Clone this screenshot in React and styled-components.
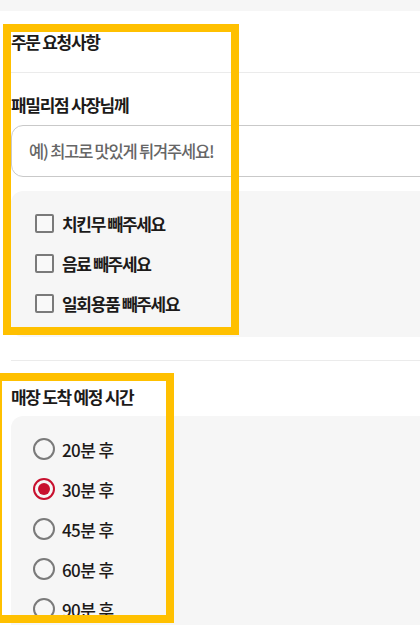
import React from "react";
import styled, { createGlobalStyle } from "styled-components";

const GlobalStyle = createGlobalStyle`
  html, body {
    margin: 0;
    padding: 0;
    overflow: hidden;
    background: #fff;
  }
  body {
    font-family: "Noto Sans CJK KR", "Noto Sans", sans-serif;
    color: #1c1a19;
  }
`;

const Page = styled.div`
  position: relative;
  width: 440px;
`;

const TopStrip = styled.div`
  height: 11px;
  background: #f6f6f6;
`;

const Section = styled.section`
  padding: ${(p) => p.$pad || "0"};
  padding-left: 11px;
`;

const SectionTitle = styled.h2`
  margin: 0;
  font-size: 17px;
  font-weight: 700;
  letter-spacing: -1.3px;
  line-height: 24px;
`;

const Divider = styled.hr`
  margin: 0;
  border: 0;
  border-top: 1.5px solid #ebebeb;
`;

const Label = styled.h3`
  margin: 0;
  font-size: 17px;
  font-weight: 700;
  letter-spacing: -1.3px;
  line-height: 24px;
`;

const TextInput = styled.input`
  display: block;
  box-sizing: border-box;
  width: 100%;
  height: 52px;
  margin-top: 8px;
  padding: 0 17px;
  border: 1.5px solid #c9c9c9;
  border-radius: 12px;
  font-family: inherit;
  font-size: 16.5px;
  font-weight: 500;
  letter-spacing: -1.2px;
  background: #fff;
  outline: none;
  &::placeholder {
    color: #666;
  }
`;

const OptionPanel = styled.div`
  margin-top: ${(p) => p.$top || "14px"};
  padding: ${(p) => p.$pad || "12px 0 14px 24px"};
  background: #f6f6f6;
  border-radius: 12px;
`;

const OptionRow = styled.label`
  display: flex;
  align-items: center;
  height: 40px;
  gap: ${(p) => p.$gap || "8px"};
`;

const CheckBox = styled.span`
  box-sizing: border-box;
  width: 19px;
  height: 19px;
  border: 2px solid #7a7a7a;
  border-radius: 2px;
  background: #f9f9f9;
`;

const CheckText = styled.span`
  font-size: 17px;
  font-weight: 700;
  letter-spacing: -1.3px;
`;

const Radio = styled.span`
  box-sizing: border-box;
  width: 22px;
  height: 22px;
  border-radius: 50%;
  border: 2px solid ${(p) => (p.$checked ? "#c8102e" : "#7a7a7a")};
  display: flex;
  align-items: center;
  justify-content: center;
  &::after {
    content: "";
    width: 12px;
    height: 12px;
    border-radius: 50%;
    background: ${(p) => (p.$checked ? "#c8102e" : "transparent")};
  }
`;

const RadioText = styled.span`
  font-size: 17px;
  font-weight: 500;
  letter-spacing: -0.6px;
`;

const Highlight = styled.div`
  position: absolute;
  box-sizing: border-box;
  border: 8px solid #ffc000;
  pointer-events: none;
`;

const checks = ["치킨무 빼주세요", "음료 빼주세요", "일회용품 빼주세요"];
const times = ["20분 후", "30분 후", "45분 후", "60분 후", "90분 후"];

export default function App() {
  return (
    <Page>
      <GlobalStyle />
      <TopStrip />
      <Section $pad="19px 0 18px">
        <SectionTitle>주문 요청사항</SectionTitle>
      </Section>
      <Section>
        <Divider />
      </Section>
      <Section $pad="20px 0 0">
        <Label>패밀리점 사장님께</Label>
        <TextInput placeholder="예) 최고로 맛있게 튀겨주세요!" />
        <OptionPanel>
          {checks.map((c) => (
            <OptionRow key={c}>
              <CheckBox />
              <CheckText>{c}</CheckText>
            </OptionRow>
          ))}
        </OptionPanel>
      </Section>
      <Section $pad="23px 0 0">
        <Divider />
      </Section>
      <Section $pad="24px 0 0">
        <Label>매장 도착 예정 시간</Label>
        <OptionPanel $top="7px" $pad="13px 0 14px 22px">
          {times.map((t) => (
            <OptionRow key={t} $gap="7px">
              <Radio $checked={t === "30분 후"} />
              <RadioText>{t}</RadioText>
            </OptionRow>
          ))}
        </OptionPanel>
      </Section>
      <Highlight style={{ left: 3, top: 24, width: 236, height: 311 }} />
      <Highlight style={{ left: -6, top: 373, width: 180, height: 250 }} />
    </Page>
  );
}
